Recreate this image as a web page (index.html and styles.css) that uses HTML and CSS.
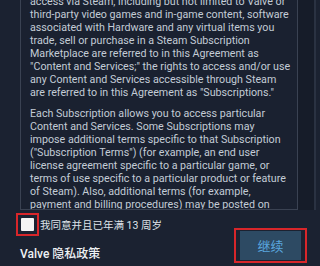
FILE: index.html
```html
<!DOCTYPE html>
<html>
<head>
<meta charset="utf-8">
<link rel="stylesheet" href="styles.css">
</head>
<body>
<div class="screen">
  <div class="top">
    <div class="terms">
      <div class="scroll">
        <p>access via Steam, including but not limited to Valve or<br>third-party video games and in-game content, software<br>associated with Hardware and any virtual items you<br>trade, sell or purchase in a Steam Subscription<br>Marketplace are referred to in this Agreement as<br>"Content and Services;" the rights to access and/or use<br>any Content and Services accessible through Steam<br>are referred to in this Agreement as "Subscriptions."</p>
        <p>Each Subscription allows you to access particular<br>Content and Services. Some Subscriptions may<br>impose additional terms specific to that Subscription<br>("Subscription Terms") (for example, an end user<br>license agreement specific to a particular game, or<br>terms of use specific to a particular product or feature<br>of Steam). Also, additional terms (for example,<br>payment and billing procedures) may be posted on<br>Steam.</p>
      </div>
    </div>
    <div class="rail"></div>
  </div>
  <div class="footer">
    <div class="left">
      <label class="agree">
        <span class="box-wrap"><span class="check"></span></span>
        <span class="agree-text">我同意并且已年满 13 周岁</span>
      </label>
      <div class="privacy">Valve 隐私政策</div>
    </div>
    <div class="btn-wrap"><button class="continue">继续</button></div>
  </div>
</div>
</body>
</html>
```
FILE: styles.css
```css
html, body {
  margin: 0;
  padding: 0;
}
body {
  width: 320px;
  height: 266px;
  overflow: hidden;
  background: #1b2231;
  font-family: Roboto, "Noto Sans CJK SC", sans-serif;
}
.screen {
  display: flex;
  flex-direction: column;
  height: 266px;
}
.top {
  display: flex;
  height: 210px;
  padding-left: 20px;
}
.terms {
  width: 276px;
  border: 1px solid #3a4252;
  border-top: none;
  background: #1a2130;
  overflow: hidden;
}
.scroll {
  margin-top: -5px;
  padding-left: 9px;
  color: #c3ccd6;
  font-size: 10.7px;
  line-height: 13px;
  white-space: nowrap;
}
.scroll p {
  margin: 0 0 8px;
}
.rail {
  width: 16px;
  border-right: 2px solid #2a3242;
  background: #161c29;
}
.footer {
  flex: 1;
  display: flex;
  justify-content: space-between;
  padding-left: 16px;
}
.left {
  display: flex;
  flex-direction: column;
}
.agree {
  display: flex;
  align-items: center;
  margin-top: 3px;
}
.box-wrap {
  width: 19px;
  height: 19px;
  border: 2px solid #d8262a;
  display: flex;
  align-items: center;
  justify-content: center;
}
.check {
  width: 13px;
  height: 13px;
  background: #f4f4f4;
  border-radius: 1px;
}
.agree-text {
  color: #dfe4ea;
  font-size: 10.5px;
  margin-left: 1px;
}
.privacy {
  margin-top: 8px;
  margin-left: 4px;
  color: #eef1f4;
  font-size: 12px;
  font-weight: 500;
}
.btn-wrap {
  margin-top: 18px;
  margin-right: 13px;
  width: 69px;
  height: 31px;
  border: 2px solid #d8262a;
  display: flex;
  align-items: center;
  justify-content: center;
}
.continue {
  width: 61px;
  height: 29px;
  border: none;
  background: #2d4a63;
  color: #5aa6df;
  font-family: "Noto Sans CJK SC", sans-serif;
  font-size: 13px;
  padding: 0;
}
```
